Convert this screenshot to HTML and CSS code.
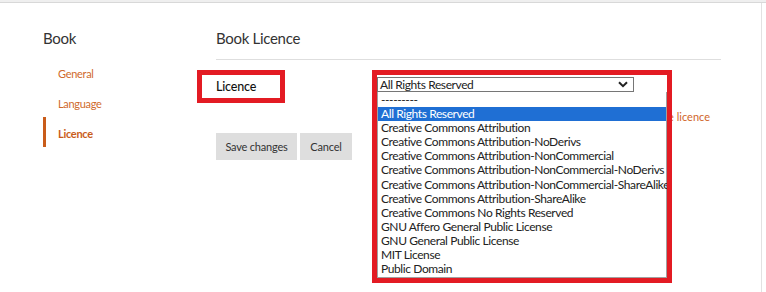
FILE: index.html
```html
<!DOCTYPE html>
<html lang="en">
<head>
    <meta charset="UTF-8">
    <meta name="viewport" content="width=device-width, initial-scale=1.0">
    <title>Book Licence</title>
    <link rel="stylesheet" href="styles.css">
</head>
<body>
    <div class="topbar"></div>

    <div class="page">
        <div class="sidebar">
            <h2>Book</h2>
            <ul class="side-nav">
                <li><a href="#">General</a></li>
                <li><a href="#">Language</a></li>
                <li class="active"><a href="#">Licence</a></li>
            </ul>
        </div>

        <div class="main">
            <h2 class="main-title">Book Licence</h2>

            <form class="licence-form">
                <div class="form-row">
                    <label class="field-label">Licence</label>
                    <div class="field">
                        <div class="select">
                            <span>All Rights Reserved</span>
                            <svg class="chevron" width="10" height="7" viewBox="0 0 10 7">
                                <path d="M1 1.2 L5 5.2 L9 1.2" fill="none" stroke="#222" stroke-width="2"/>
                            </svg>
                        </div>
                        <p class="help">Read our short guide on how to choose licence</p>

                        <ul class="options">
                            <li>---------</li>
                            <li class="selected">All Rights Reserved</li>
                            <li>Creative Commons Attribution</li>
                            <li>Creative Commons Attribution-NoDerivs</li>
                            <li>Creative Commons Attribution-NonCommercial</li>
                            <li>Creative Commons Attribution-NonCommercial-NoDerivs</li>
                            <li>Creative Commons Attribution-NonCommercial-ShareAlike</li>
                            <li>Creative Commons Attribution-ShareAlike</li>
                            <li>Creative Commons No Rights Reserved</li>
                            <li>GNU Affero General Public License</li>
                            <li>GNU General Public License</li>
                            <li>MIT License</li>
                            <li>Public Domain</li>
                        </ul>
                        <div class="mark"></div>
                    </div>
                </div>

                <div class="buttons">
                    <button type="button" class="btn">Save changes</button>
                    <button type="button" class="btn">Cancel</button>
                </div>
            </form>
        </div>
    </div>
</body>
</html>
```

FILE: styles.css
```css
body{
    margin: 0;
    font-family: Lato, "Open Sans", Arial, sans-serif;
    color: #333;
    background: #fff;
}

.topbar{
    height: 2px;
    background-color: #efefef;
    border-bottom: 1px solid #d8d8d8;
}

.page{
    display: flex;
    width: 762px;
    min-height: 289px;
    border-right: 1px solid #e2e2e2;
    box-sizing: border-box;
    padding-top: 25px;
}

/* left menu */
.sidebar{
    width: 173px;
    padding-left: 43px;
}

.sidebar h2,
.main-title{
    margin: 0;
    font-size: 15px;
    font-weight: normal;
    line-height: 20px;
    color: #333;
    letter-spacing: -0.3px;
}

.side-nav{
    list-style: none;
    margin: 9px 0 0 0;
    padding: 0;
}

.side-nav li{
    height: 30px;
    line-height: 30px;
    padding-left: 15px;
    border-left: 3px solid transparent;
}

.side-nav a{
    color: #cf6a2c;
    text-decoration: none;
    font-size: 11px;
    letter-spacing: -0.3px;
    position: relative;
    left: -3px;
}

.side-nav li.active{
    border-left-color: #c95c1a;
}

.side-nav li.active a{
    font-weight: bold;
    color: #c95c1a;
}

/* main column */
.main{
    flex: 1;
    padding-right: 40px;
}

.main-title{
    padding-bottom: 11px;
    border-bottom: 1px solid #dedede;
}

.licence-form{
    margin-top: 10px;
}

.form-row{
    display: flex;
    align-items: flex-start;
}

.field-label{
    width: 88px;
    height: 33px;
    box-sizing: border-box;
    margin-left: -19px;
    padding-left: 14px;
    border: 5px solid #e31b23;
    font-size: 12.5px;
    font-weight: 500;
    letter-spacing: -0.2px;
    line-height: 23px;
    color: #111;
}

.field{
    position: relative;
    width: 333px;
    margin-left: 87px;
    padding: 7px 0 0 5px;
}

.select{
    display: flex;
    align-items: center;
    justify-content: space-between;
    width: 257px;
    height: 15px;
    box-sizing: border-box;
    border: 1px solid #767676;
    padding: 0 5px 0 2px;
    font-size: 12px;
    letter-spacing: -0.4px;
    line-height: 13px;
    color: #222;
}

.help{
    margin: 18px 0 0 0;
    font-size: 11px;
    line-height: 14px;
    color: #d0662a;
    text-align: right;
}

/* the open list of the select */
.options{
    position: absolute;
    top: 22px;
    left: 5px;
    width: 290px;
    box-sizing: border-box;
    height: 186px;
    margin: 0;
    padding: 1px 0 0 0;
    list-style: none;
    background: #fff;
    border: 1px solid #a0a0a0;
    border-top: none;
    font-size: 12px;
    letter-spacing: -0.4px;
    line-height: 14.1px;
    color: #222;
}

.options li{
    padding-left: 3px;
    white-space: nowrap;
}

.options li.selected{
    background-color: #1f6fd4;
    color: #fff;
}

/* red highlight round the select */
.mark{
    position: absolute;
    top: 0;
    left: 0;
    width: 300px;
    height: 213px;
    box-sizing: border-box;
    border: 5px solid #e31b23;
    pointer-events: none;
}

.buttons{
    display: flex;
    gap: 3px;
    margin-top: 9px;
}

.btn{
    height: 27px;
    border: none;
    background-color: #dedede;
    color: #333;
    font-family: Lato, "Open Sans", Arial, sans-serif;
    font-size: 11px;
    letter-spacing: -0.2px;
    padding: 0;
    white-space: nowrap;
    cursor: pointer;
}

.btn:first-child{
    width: 81px;
}

.btn:last-child{
    width: 52px;
}
```
